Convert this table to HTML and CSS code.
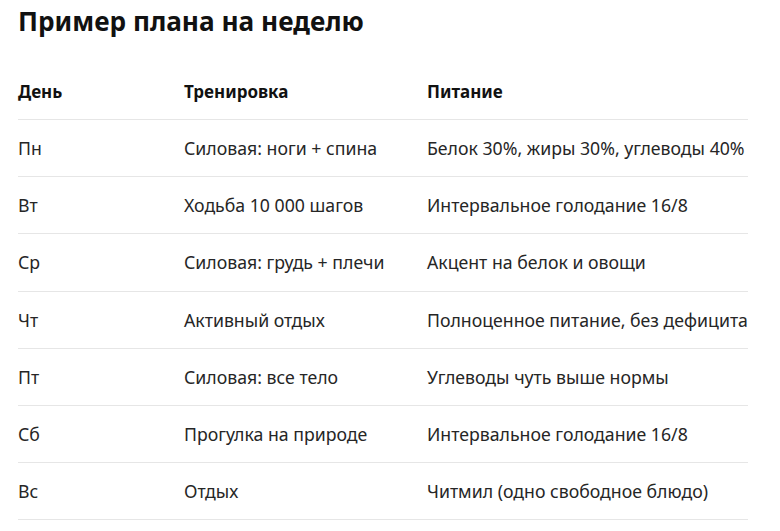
FILE: index.html
```html
<!DOCTYPE html>
<html lang="ru">
<head>
<meta charset="utf-8">
<link rel="stylesheet" href="styles.css">
</head>
<body>
<h1 class="title">Пример плана на неделю</h1>
<table class="plan">
  <thead>
    <tr><th class="c1">День</th><th class="c2">Тренировка</th><th class="c3">Питание</th></tr>
  </thead>
  <tbody>
    <tr><td>Пн</td><td>Силовая: ноги + спина</td><td>Белок 30%, жиры 30%, углеводы 40%</td></tr>
    <tr><td>Вт</td><td>Ходьба 10 000 шагов</td><td>Интервальное голодание 16/8</td></tr>
    <tr><td>Ср</td><td>Силовая: грудь + плечи</td><td>Акцент на белок и овощи</td></tr>
    <tr><td>Чт</td><td>Активный отдых</td><td>Полноценное питание, без дефицита</td></tr>
    <tr><td>Пт</td><td>Силовая: все тело</td><td>Углеводы чуть выше нормы</td></tr>
    <tr><td>Сб</td><td>Прогулка на природе</td><td>Интервальное голодание 16/8</td></tr>
    <tr><td>Вс</td><td>Отдых</td><td>Читмил (одно свободное блюдо)</td></tr>
  </tbody>
</table>
</body>
</html>
```
FILE: styles.css
```css
html, body { margin: 0; padding: 0; background: #fff; }
body {
  font-family: "Noto Sans", "Open Sans", sans-serif;
  color: #1f1f1f;
  padding: 0 18px;
}
.title {
  font-size: 26.2px;
  font-weight: 700;
  color: #111;
  margin: 3px 0 0 0;
  line-height: 36px;
}
.plan {
  border-collapse: collapse;
  table-layout: fixed;
  width: 730px;
  margin-top: 24px;
  font-size: 17.7px;
}
.plan th, .plan td {
  text-align: left;
  padding: 0;
  height: 56.14px;
  border-bottom: 1px solid #e6e6e6;
  vertical-align: middle;
  white-space: nowrap;
}
.plan th { font-weight: 700; font-size: 17px; color: #111; }
.plan td { color: #262626; }
.c1 { width: 166px; }
.c2 { width: 243px; }
.c3 { width: 321px; }
```
